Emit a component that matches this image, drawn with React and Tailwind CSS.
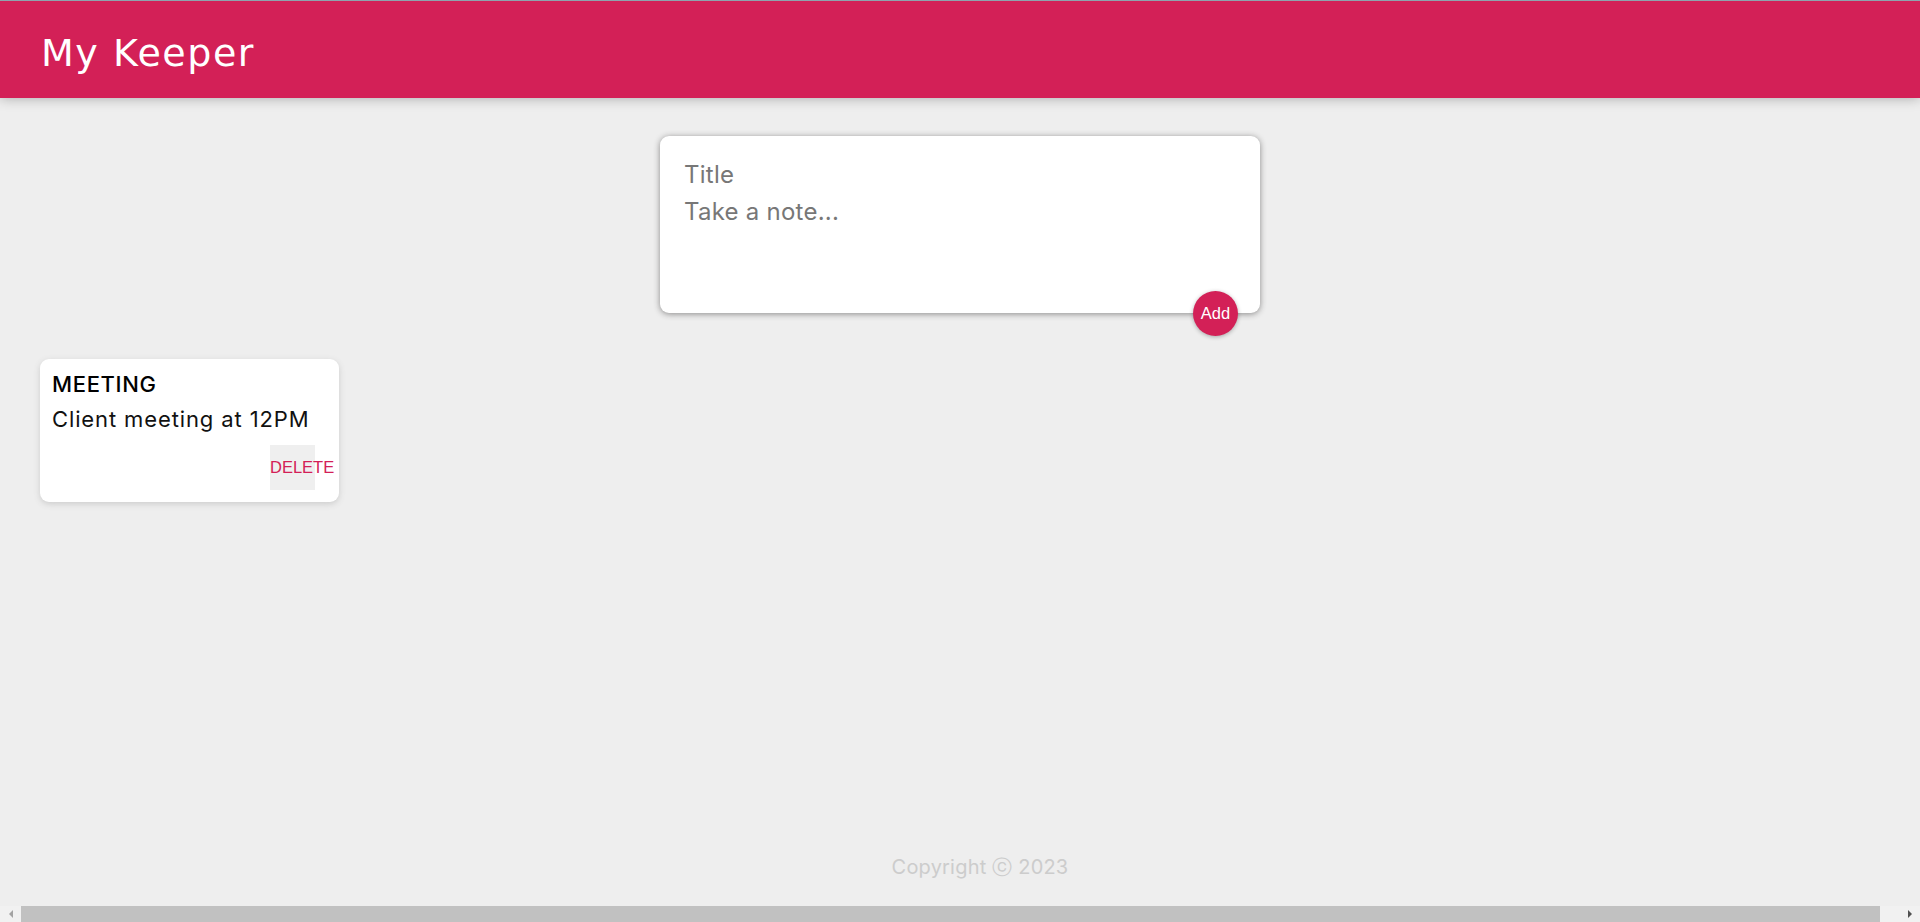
import React, { useState } from 'react';

const body = { fontFamily: 'Inter, "Noto Sans", sans-serif' };

const Header = () => (
  <header className="h-[98px] shrink-0 border-t border-[#8ea3ae] bg-[#d32057] pl-[41px] shadow-[0_0_12px_0_rgba(0,0,0,0.3)] flex items-center z-10">
    <h1 className="text-[38px] leading-none text-white pt-[6px] tracking-[0.04em] font-['DejaVu_Sans',Verdana,sans-serif]">My Keeper</h1>
  </header>
);

const CreateArea = ({ onAdd }) => {
  const [note, setNote] = useState({ title: '', content: '' });

  const submit = (e) => {
    e.preventDefault();
    onAdd(note);
    setNote({ title: '', content: '' });
  };

  return (
    <form
      onSubmit={submit}
      className="relative mx-auto mt-[38px] mb-[26px] w-[600px] rounded-[9px] bg-white p-[19px] shadow-[0_1px_6px_rgb(138,137,137)]"
    >
      <input
        value={note.title}
        onChange={(e) => setNote({ ...note, title: e.target.value })}
        placeholder="Title"
        className="block w-full h-[39px] px-[5px] text-[24px] text-[#333] placeholder:text-[#777] outline-none tracking-[0.01em]"
        style={body}
      />
      <textarea
        value={note.content}
        onChange={(e) => setNote({ ...note, content: e.target.value })}
        placeholder="Take a note..."
        rows={3}
        className="block w-full h-[100px] px-[5px] py-[3px] text-[24px] leading-[30px] text-[#333] placeholder:text-[#777] outline-none resize-none tracking-[0.01em]"
        style={body}
      />
      <button
        type="submit"
        className="absolute right-[22px] bottom-[-23px] h-[45px] w-[45px] rounded-full bg-[#d32057] text-[16.5px] text-white shadow-[0_1px_4px_rgba(0,0,0,0.3)] font-['Liberation_Sans',Arial,sans-serif]"
      >
        Add
      </button>
    </form>
  );
};

const Note = ({ title, content, onDelete }) => (
  <div className="w-[299px] m-[20px] rounded-[9px] bg-white p-[12px] shadow-[0_2px_6px_#ccc]" style={body}>
    <h1 className="text-[22px] leading-[27px] font-medium text-black mb-[8px] tracking-[0.03em]">{title}</h1>
    <p className="text-[22px] leading-[27px] text-[#111] mb-[12px] tracking-[0.04em]">{content}</p>
    <div className="flex justify-end pr-[12px]">
      <button
        onClick={onDelete}
        className="h-[45px] w-[45px] bg-[#efefef] text-[16.5px] text-[#d32057] whitespace-nowrap overflow-visible flex items-center font-['Liberation_Sans',Arial,sans-serif]"
      >
        DELETE
      </button>
    </div>
  </div>
);

const Scrollbar = () => (
  <div className="h-[16px] shrink-0 bg-[#f1f1f1] flex items-stretch">
    <div className="w-[21px] flex items-center justify-center">
      <span className="block w-0 h-0 border-y-[4px] border-y-transparent border-r-[4px] border-r-[#a3a3a3]" />
    </div>
    <div className="flex-1 bg-[#c1c1c1]" />
    <div className="w-[40px] flex items-center justify-end pr-[8px]">
      <span className="block w-0 h-0 border-y-[4px] border-y-transparent border-l-[4px] border-l-[#505050]" />
    </div>
  </div>
);

export default function App() {
  const [notes, setNotes] = useState([{ title: 'MEETING', content: 'Client meeting at 12PM' }]);

  const addNote = (n) => {
    if (!n.title && !n.content) return;
    setNotes((prev) => [...prev, n]);
  };

  const deleteNote = (id) => setNotes((prev) => prev.filter((_, i) => i !== id));

  return (
    <div className="h-[922px] flex flex-col bg-[#eeeeee] overflow-hidden" style={body}>
      <Header />
      <main className="flex-1 flex flex-col px-[20px]">
        <CreateArea onAdd={addNote} />
        <div className="flex flex-wrap">
          {notes.map((n, i) => (
            <Note key={i} title={n.title} content={n.content} onDelete={() => deleteNote(i)} />
          ))}
        </div>
        <div className="flex-1" />
        <footer className="pl-[40px] pb-[24px] text-center">
          <p className="text-[20px] text-[#cccccc] tracking-[0.01em]">Copyright ⓒ 2023</p>
        </footer>
      </main>
      <Scrollbar />
    </div>
  );
}
